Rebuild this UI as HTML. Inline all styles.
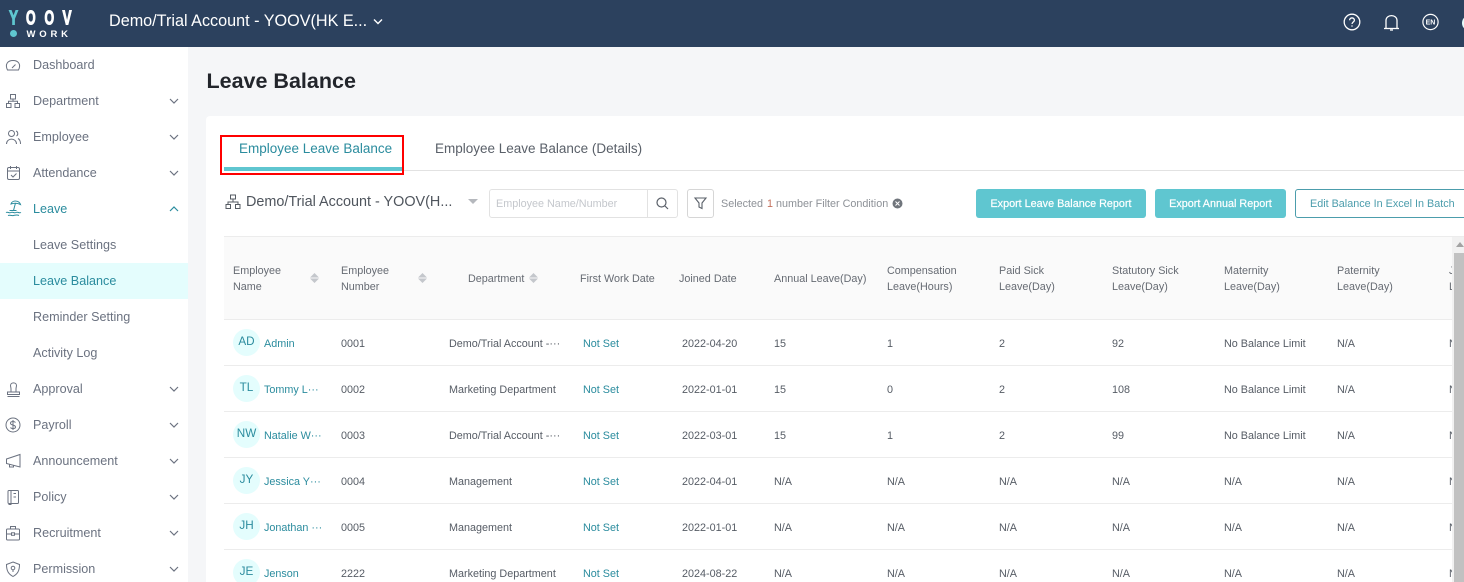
<!DOCTYPE html>
<html><head><meta charset="utf-8">
<style>
*{box-sizing:border-box}
html,body{margin:0;padding:0;width:1464px;height:582px;overflow:hidden;background:#f5f6f8;font-family:"Liberation Sans",Arial,sans-serif}
#w{position:relative;width:1464px;height:582px;overflow:hidden;background:#f5f6f8}
.a{position:absolute;white-space:nowrap}
#top{left:0;top:0;width:1464px;height:47px;background:#2c415e}
#side{left:0;top:47px;width:188px;height:535px;background:#fff}
.m{position:absolute;left:33px;font-size:12.6px;line-height:20px;margin-top:2px;color:#6b7280;white-space:nowrap}
.t{position:absolute;font-size:10.8px;line-height:16px;margin-top:2px;color:#565c65;white-space:nowrap}
.h{position:absolute;font-size:10.8px;line-height:16px;margin-top:2px;color:#666b73;white-space:nowrap}
.l{position:absolute;left:224px;width:1228px;height:1px;background:#ececec}
.c{color:#2b8c9e}
.av{position:absolute;left:233px;width:27px;height:27px;border-radius:50%;background:#e4fdfd;color:#2b8c9e;font-size:11.7px;line-height:26px;text-align:center}
svg{position:absolute;overflow:visible}
.ic{fill:none;stroke:#6b7280;stroke-width:1}
.ch{fill:none;stroke:#6b7280;stroke-width:1.2}
</style></head><body><div id="w">
<div class="a" id="top"></div>
<svg style="left:0;top:0" width="80" height="40" font-family="Liberation Sans" font-weight="bold" font-size="20" stroke-width="1.100">
<text transform="translate(9 24.300) scale(.68 1)" fill="#5fc6d0" stroke="#5fc6d0">Y</text>
<text transform="translate(26 24.300) scale(.62 1)" fill="#fff" stroke="#fff">O</text>
<text transform="translate(44.500 24.300) scale(.62 1)" fill="#fff" stroke="#fff">O</text>
<text transform="translate(62.500 24.300) scale(.68 1)" fill="#fff" stroke="#fff">V</text>
</svg>
<div class="a" style="left:10px;top:30px;width:7px;height:7px;border-radius:50%;background:#5fc6d0"></div>
<div class="a" style="left:26.500px;top:28.500px;font-size:9.500px;line-height:11px;font-weight:bold;color:#fff;letter-spacing:3.800px">WORK</div>
<div class="a" style="left:109px;top:11px;font-size:16.200px;line-height:20px;color:#fff">Demo/Trial Account - YOOV(HK E...</div>
<svg style="left:373px;top:18px" width="10" height="8"><path d="M1 1.500L5 5.500L9 1.500" fill="none" stroke="#fff" stroke-width="1.400"/></svg>
<svg style="left:1343px;top:13px" width="18" height="18" fill="none" stroke="#fff" stroke-width="1.300"><circle cx="9" cy="9" r="7.800"/><path d="M6.600 7.200C6.600 4.200 11.400 4.200 11.400 7.200C11.400 9 9 9 9 11"/><path d="M9 12.400V13.600"/></svg>
<svg style="left:1383px;top:13px" width="18" height="19" fill="none" stroke="#fff" stroke-width="1.300"><path d="M3 15V7.500C3 1 14 1 14 7.500V15"/><path d="M1 15.500H16"/><path d="M7 17H10"/></svg>
<svg style="left:1422px;top:14px" width="17" height="17"><circle cx="8.500" cy="8" r="7.600" fill="none" stroke="#fff" stroke-width="1.200"/><text x="8.500" y="10.500" font-size="7" font-weight="bold" fill="#fff" text-anchor="middle" font-family="Liberation Sans">EN</text></svg>
<div class="a" style="left:1462px;top:15px;width:16px;height:16px;border-radius:50%;background:#e4fdfd"></div>

<div class="a" id="side"></div>
<div class="a" style="left:0;top:263px;width:188px;height:36px;background:#e4fdfd"></div>
<div class="m" style="top:53px">Dashboard</div>
<div class="m" style="top:89px">Department</div>
<div class="m" style="top:125px">Employee</div>
<div class="m" style="top:161px">Attendance</div>
<div class="m c" style="top:197px">Leave</div>
<div class="m" style="top:233px">Leave Settings</div>
<div class="m c" style="top:269px">Leave Balance</div>
<div class="m" style="top:305px">Reminder Setting</div>
<div class="m" style="top:341px">Activity Log</div>
<div class="m" style="top:377px">Approval</div>
<div class="m" style="top:413px">Payroll</div>
<div class="m" style="top:449px">Announcement</div>
<div class="m" style="top:485px">Policy</div>
<div class="m" style="top:521px">Recruitment</div>
<div class="m" style="top:557px">Permission</div>

<svg class="ic" style="left:5px;top:57px" width="16" height="16"><path d="M2.500 13C-.500 7 3 3.500 8 3.500S16.500 7 13.500 13Z"/><path d="M7 11L10.500 7.500"/></svg>
<svg class="ic" style="left:5px;top:93px" width="16" height="16"><rect x="5.500" y="1.500" width="5" height="4.500"/><rect x="1.500" y="10.500" width="4.500" height="4"/><rect x="10" y="10.500" width="4.500" height="4"/><path d="M8 6V8.300M3.500 10.500V8.300H12.500V10.500"/></svg>
<svg class="ic" style="left:5px;top:129px" width="16" height="16"><circle cx="6.500" cy="4.500" r="3"/><path d="M1.500 15C1.500 8.500 11.500 8.500 11.500 15"/><path d="M11 2C13 2.500 13.500 6 11.500 7M13 9.500C15 10.500 15.500 12.500 15.500 15"/></svg>
<svg class="ic" style="left:6px;top:165px" width="15" height="16"><rect x="1.500" y="2.500" width="12" height="12" rx="1.500"/><path d="M1.500 6H13.500M4.500 1V4M10.500 1V4M5 10L7 12L10.500 8.500"/></svg>
<svg style="left:5px;top:200px;stroke:#2b8c9e;stroke-width:1;fill:none" width="17" height="17"><path d="M6 4C7 0 14 0 15.500 4.500C12.500 3 9 3 6 4Z"/><path d="M10.500 3L8.500 10.500M4.500 10.500H11.500"/><path d="M1 12.500C3 11.300 4 13.700 6 12.500S9 13.700 11 12.500S14 13.700 16 12.500M3 15.500C5 14.500 6 16 8.500 15.500S12 14.500 14 15.500"/></svg>
<svg class="ic" style="left:6px;top:381px" width="15" height="16"><path d="M5 8C5 6.500 4.500 5.500 4.500 4.500C4.500 1 10.500 1 10.500 4.500C10.500 5.500 10 6.500 10 8V11H5Z"/><path d="M1.500 11H13.500V13.500H1.500ZM1.500 15.500H13.500"/></svg>
<svg class="ic" style="left:5px;top:417px" width="16" height="16"><circle cx="8" cy="8" r="7"/><path d="M10.500 5.500C9.500 4 5.500 4 5.500 6.200C5.500 8.500 10.500 7.500 10.500 10C10.500 12 6.500 12 5.500 10.500M8 3V13"/></svg>
<svg class="ic" style="left:5px;top:453px" width="16" height="16"><path d="M1.500 6L15 1.500V14L1.500 10.500ZM4.500 11.500V14H8.500V12.500"/></svg>
<svg class="ic" style="left:6px;top:489px" width="14" height="17"><rect x="2" y="1.500" width="10.500" height="13" rx="1"/><path d="M5 1.500V15.500H2.500M7.500 4.500H10M7.500 8H10"/></svg>
<svg class="ic" style="left:5px;top:525px" width="16" height="16"><rect x="1.500" y="4" width="13" height="11" rx="1"/><path d="M5.500 4V1.500H10.500V4M1.500 9H6.500M9.500 9H14.500"/><rect x="6.500" y="7.800" width="3" height="2.500"/></svg>
<svg class="ic" style="left:5px;top:561px" width="16" height="17"><path d="M8 1L14.500 3.500C14.500 10 12.500 13 8 15.500C3.500 13 1.500 10 1.500 3.500Z"/><circle cx="8" cy="7" r="1.800"/><path d="M8 8.800V11"/></svg>

<svg class="ch" style="left:169px;top:98px" width="10" height="6"><path d="M1 1L5 5L9 1"/></svg>
<svg class="ch" style="left:169px;top:134px" width="10" height="6"><path d="M1 1L5 5L9 1"/></svg>
<svg class="ch" style="left:169px;top:170px" width="10" height="6"><path d="M1 1L5 5L9 1"/></svg>
<svg class="ch" style="left:169px;top:206px" width="10" height="6"><path d="M1 5L5 1L9 5" stroke="#2b8c9e"/></svg>
<svg class="ch" style="left:169px;top:386px" width="10" height="6"><path d="M1 1L5 5L9 1"/></svg>
<svg class="ch" style="left:169px;top:422px" width="10" height="6"><path d="M1 1L5 5L9 1"/></svg>
<svg class="ch" style="left:169px;top:458px" width="10" height="6"><path d="M1 1L5 5L9 1"/></svg>
<svg class="ch" style="left:169px;top:494px" width="10" height="6"><path d="M1 1L5 5L9 1"/></svg>
<svg class="ch" style="left:169px;top:530px" width="10" height="6"><path d="M1 1L5 5L9 1"/></svg>
<svg class="ch" style="left:169px;top:566px" width="10" height="6"><path d="M1 1L5 5L9 1"/></svg>

<div class="a" style="left:206.500px;top:66.500px;font-size:21.500px;line-height:28px;font-weight:bold;color:#22252b">Leave Balance</div>
<div class="a" style="left:206px;top:116px;width:1270px;height:480px;background:#fff;border-radius:4px"></div>

<div class="a" style="left:224px;top:170px;width:1240px;height:1px;background:#e2e2e2"></div>
<div class="a" style="left:239px;top:138px;font-size:13.500px;line-height:20px;margin-top:1px;color:#2b8c9e">Employee Leave Balance</div>
<div class="a" style="left:435px;top:138px;font-size:13.500px;line-height:20px;margin-top:1px;color:#5a6069">Employee Leave Balance (Details)</div>
<div class="a" style="left:224px;top:167px;width:180px;height:4px;background:#5fc6d0"></div>
<div class="a" style="left:220px;top:135px;width:184px;height:40px;border:2px solid #f00"></div>

<svg class="ic" style="left:225px;top:194px;stroke:#555b63" width="16" height="16"><rect x="5.500" y="1" width="5" height="4"/><rect x="1" y="10.500" width="4.500" height="4"/><rect x="10.500" y="10.500" width="4.500" height="4"/><path d="M8 5V8M3 10.500V8H13V10.500"/></svg>
<div class="a" style="left:246px;top:193px;font-size:14.400px;line-height:18px;color:#4f555d">Demo/Trial Account - YOOV(H...</div>
<svg style="left:468px;top:199px" width="10" height="6"><path d="M0 0H10L5 5Z" fill="#b5b8bd"/></svg>

<div class="a" style="left:489px;top:189px;width:189px;height:29px;border:1px solid #e2e2e2;border-radius:3px"></div>
<div class="a" style="left:647px;top:189px;width:1px;height:29px;background:#e2e2e2"></div>
<div class="a" style="left:496px;top:196px;font-size:10.800px;line-height:16px;color:#c4c7cc">Employee Name/Number</div>
<svg style="left:656px;top:197px;stroke:#5a6069;stroke-width:1.200;fill:none" width="13" height="13"><circle cx="5.500" cy="5.500" r="4.500"/><path d="M9 9L12 12"/></svg>
<div class="a" style="left:687px;top:189px;width:27px;height:29px;border:1px solid #d6d6d6;border-radius:3px"></div>
<svg style="left:694px;top:197px;stroke:#5a6069;stroke-width:1.100;fill:none" width="13" height="13"><path d="M1 1H12L8 6V11.500L5 10V6Z"/></svg>
<div class="a" style="left:721px;top:196px;font-size:10.800px;line-height:16px;color:#8d9197">Selected</div>
<div class="a" style="left:767px;top:196px;font-size:10.800px;line-height:16px;color:#c4705c">1</div>
<div class="a" style="left:776px;top:196px;font-size:10.800px;line-height:16px;color:#8d9197">number Filter Condition</div>
<svg style="left:892px;top:198px" width="11" height="11"><circle cx="5.500" cy="5.500" r="5" fill="#70757c"/><path d="M3.500 3.500L7.500 7.500M7.500 3.500L3.500 7.500" stroke="#fff" stroke-width="1"/></svg>

<div class="a" style="left:976px;top:189px;width:170px;height:29px;background:#5fc6d0;border-radius:3px;color:#fff;font-size:10.800px;line-height:30px;text-align:center;-webkit-text-stroke:.2px #fff">Export Leave Balance Report</div>
<div class="a" style="left:1155px;top:189px;width:131px;height:29px;background:#5fc6d0;border-radius:3px;color:#fff;font-size:10.800px;line-height:30px;text-align:center;-webkit-text-stroke:.2px #fff">Export Annual Report</div>
<div class="a" style="left:1295px;top:189px;width:180px;height:29px;border:1px solid #4c9dac;border-radius:3px;color:#4c9dac;font-size:10.800px;line-height:28px;padding-left:14px">Edit Balance In Excel In Batch</div>

<div class="a" style="left:224px;top:236px;width:1240px;height:84px;background:#fafafa;border-top:1px solid #ececec;border-bottom:1px solid #ececec"></div>
<div class="h" style="left:233px;top:261px">Employee<br>Name</div>
<svg style="left:310px;top:273px" width="9" height="10"><path d="M0 4.500L4.500 0L9 4.500ZM0 5.500L4.500 10L9 5.500Z" fill="#c4c7cc"/></svg>
<div class="h" style="left:341px;top:261px">Employee<br>Number</div>
<svg style="left:418px;top:273px" width="9" height="10"><path d="M0 4.500L4.500 0L9 4.500ZM0 5.500L4.500 10L9 5.500Z" fill="#c4c7cc"/></svg>
<div class="h" style="left:468px;top:269px">Department</div>
<svg style="left:529px;top:273px" width="9" height="10"><path d="M0 4.500L4.500 0L9 4.500ZM0 5.500L4.500 10L9 5.500Z" fill="#c4c7cc"/></svg>
<div class="h" style="left:580px;top:269px">First Work Date</div>
<div class="h" style="left:679px;top:269px">Joined Date</div>
<div class="h" style="left:774px;top:269px">Annual Leave(Day)</div>
<div class="h" style="left:887px;top:261px">Compensation<br>Leave(Hours)</div>
<div class="h" style="left:999px;top:261px">Paid Sick<br>Leave(Day)</div>
<div class="h" style="left:1112px;top:261px">Statutory Sick<br>Leave(Day)</div>
<div class="h" style="left:1224px;top:261px">Maternity<br>Leave(Day)</div>
<div class="h" style="left:1337px;top:261px">Paternity<br>Leave(Day)</div>
<div class="h" style="left:1449px;top:261px">J<br>L</div>

<div class="l" style="top:365px"></div><div class="l" style="top:411px"></div><div class="l" style="top:457px"></div><div class="l" style="top:503px"></div><div class="l" style="top:549px"></div>

<div class="av" style="top:329px">AD</div><div class="t c" style="left:264px;top:334px">Admin</div><div class="t" style="left:341px;top:334px">0001</div><div class="t" style="left:449px;top:334px">Demo/Trial Account -···</div><div class="t c" style="left:583px;top:334px">Not Set</div><div class="t" style="left:682px;top:334px">2022-04-20</div><div class="t" style="left:774px;top:334px">15</div><div class="t" style="left:887px;top:334px">1</div><div class="t" style="left:999px;top:334px">2</div><div class="t" style="left:1112px;top:334px">92</div><div class="t" style="left:1224px;top:334px">No Balance Limit</div><div class="t" style="left:1337px;top:334px">N/A</div><div class="t" style="left:1449px;top:334px">N</div>

<div class="av" style="top:375px">TL</div><div class="t c" style="left:264px;top:380px">Tommy L···</div><div class="t" style="left:341px;top:380px">0002</div><div class="t" style="left:449px;top:380px">Marketing Department</div><div class="t c" style="left:583px;top:380px">Not Set</div><div class="t" style="left:682px;top:380px">2022-01-01</div><div class="t" style="left:774px;top:380px">15</div><div class="t" style="left:887px;top:380px">0</div><div class="t" style="left:999px;top:380px">2</div><div class="t" style="left:1112px;top:380px">108</div><div class="t" style="left:1224px;top:380px">No Balance Limit</div><div class="t" style="left:1337px;top:380px">N/A</div><div class="t" style="left:1449px;top:380px">N</div>

<div class="av" style="top:421px">NW</div><div class="t c" style="left:264px;top:426px">Natalie W···</div><div class="t" style="left:341px;top:426px">0003</div><div class="t" style="left:449px;top:426px">Demo/Trial Account -···</div><div class="t c" style="left:583px;top:426px">Not Set</div><div class="t" style="left:682px;top:426px">2022-03-01</div><div class="t" style="left:774px;top:426px">15</div><div class="t" style="left:887px;top:426px">1</div><div class="t" style="left:999px;top:426px">2</div><div class="t" style="left:1112px;top:426px">99</div><div class="t" style="left:1224px;top:426px">No Balance Limit</div><div class="t" style="left:1337px;top:426px">N/A</div><div class="t" style="left:1449px;top:426px">N</div>

<div class="av" style="top:467px">JY</div><div class="t c" style="left:264px;top:472px">Jessica Y···</div><div class="t" style="left:341px;top:472px">0004</div><div class="t" style="left:449px;top:472px">Management</div><div class="t c" style="left:583px;top:472px">Not Set</div><div class="t" style="left:682px;top:472px">2022-04-01</div><div class="t" style="left:774px;top:472px">N/A</div><div class="t" style="left:887px;top:472px">N/A</div><div class="t" style="left:999px;top:472px">N/A</div><div class="t" style="left:1112px;top:472px">N/A</div><div class="t" style="left:1224px;top:472px">N/A</div><div class="t" style="left:1337px;top:472px">N/A</div><div class="t" style="left:1449px;top:472px">N</div>

<div class="av" style="top:513px">JH</div><div class="t c" style="left:264px;top:518px">Jonathan ···</div><div class="t" style="left:341px;top:518px">0005</div><div class="t" style="left:449px;top:518px">Management</div><div class="t c" style="left:583px;top:518px">Not Set</div><div class="t" style="left:682px;top:518px">2022-01-01</div><div class="t" style="left:774px;top:518px">N/A</div><div class="t" style="left:887px;top:518px">N/A</div><div class="t" style="left:999px;top:518px">N/A</div><div class="t" style="left:1112px;top:518px">N/A</div><div class="t" style="left:1224px;top:518px">N/A</div><div class="t" style="left:1337px;top:518px">N/A</div><div class="t" style="left:1449px;top:518px">N</div>

<div class="av" style="top:559px">JE</div><div class="t c" style="left:264px;top:564px">Jenson</div><div class="t" style="left:341px;top:564px">2222</div><div class="t" style="left:449px;top:564px">Marketing Department</div><div class="t c" style="left:583px;top:564px">Not Set</div><div class="t" style="left:682px;top:564px">2024-08-22</div><div class="t" style="left:774px;top:564px">N/A</div><div class="t" style="left:887px;top:564px">N/A</div><div class="t" style="left:999px;top:564px">N/A</div><div class="t" style="left:1112px;top:564px">N/A</div><div class="t" style="left:1224px;top:564px">N/A</div><div class="t" style="left:1337px;top:564px">N/A</div><div class="t" style="left:1449px;top:564px">N</div>

<div class="a" style="left:1452px;top:237px;width:12px;height:345px;background:#f1f1f1"></div>
<svg style="left:1456px;top:242px" width="8" height="5"><path d="M0 5L4 0L8 5Z" fill="#a3a3a3"/></svg>
<div class="a" style="left:1454px;top:253px;width:10px;height:329px;background:#c1c1c1"></div>
</div></body></html>
